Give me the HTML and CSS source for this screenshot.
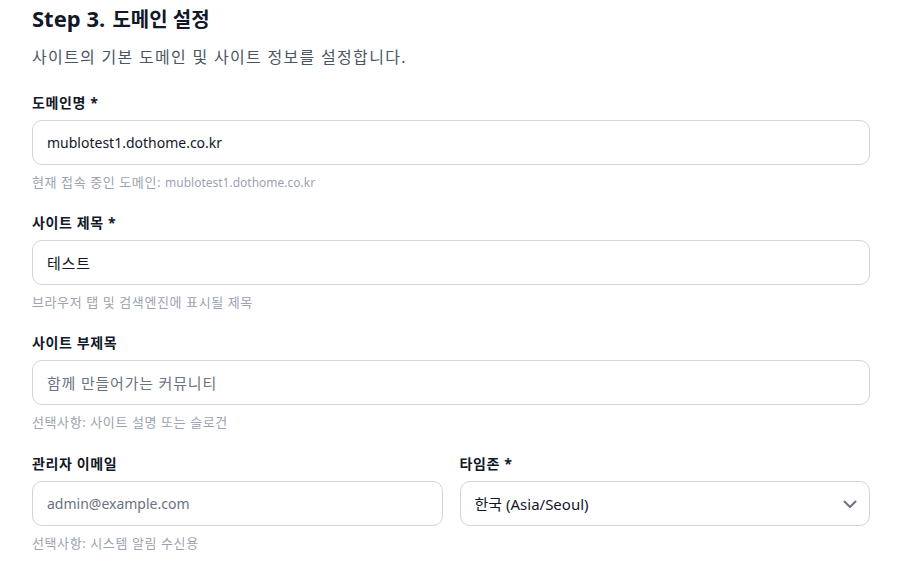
FILE: index.html
```html
<!DOCTYPE html>
<html lang="ko">
<head>
<meta charset="utf-8">
<link rel="stylesheet" href="styles.css">
</head>
<body>
<div class="page">
  <h2 class="title"><span class="step">Step 3.</span> 도메인 설정</h2>
  <p class="subtitle">사이트의 기본 도메인 및 사이트 정보를 설정합니다.</p>

  <div class="field">
    <label class="label">도메인명 *</label>
    <input class="input" type="text" value="mublotest1.dothome.co.kr">
    <p class="help">현재 접속 중인 도메인: <span class="help-latin">mublotest1.dothome.co.kr</span></p>
  </div>

  <div class="field">
    <label class="label">사이트 제목 *</label>
    <input class="input input-ko" type="text" value="테스트">
    <p class="help">브라우저 탭 및 검색엔진에 표시될 제목</p>
  </div>

  <div class="field">
    <label class="label">사이트 부제목</label>
    <input class="input input-ko" type="text" placeholder="함께 만들어가는 커뮤니티">
    <p class="help">선택사항: 사이트 설명 또는 슬로건</p>
  </div>

  <div class="row">
    <div class="field">
      <label class="label">관리자 이메일</label>
      <input class="input" type="email" placeholder="admin@example.com">
      <p class="help">선택사항: 시스템 알림 수신용</p>
    </div>
    <div class="field">
      <label class="label">타임존 *</label>
      <div class="select">
        <span>한국 (Asia/Seoul)</span>
        <svg class="chev" width="16" height="16" viewBox="0 0 16 16" fill="none"><path d="M2.5 5.5l5.5 5.5 5.5-5.5" stroke="#6b7280" stroke-width="2" stroke-linecap="round" stroke-linejoin="round"/></svg>
      </div>
    </div>
  </div>
</div>
</body>
</html>
```

FILE: styles.css
```css
* { box-sizing: border-box; }
html, body { margin: 0; padding: 0; background: #fff; }
body {
  font-family: "Noto Sans", "Noto Sans CJK KR", sans-serif;
  color: #111827;
}
.page {
  padding: 0 29px 0 32px;
}
.title {
  margin: 0;
  padding-top: 3px;
  font-size: 20px;
  font-weight: 700;
  line-height: 30px;
  color: #111827;
}
.step {
  font-size: 22px;
  margin-right: 2px;
}
.subtitle {
  margin: 10px 0 0;
  font-size: 16px;
  letter-spacing: 1.3px;
  line-height: 24px;
  color: #4b5563;
}
.field {
  margin-top: 24px;
}
.field + .field { margin-top: 22px; }
.row { margin-top: 23px; }
.row .field { margin-top: 0; }
.label {
  display: block;
  height: 20px;
  font-size: 14px;
  font-weight: 700;
  letter-spacing: 0.6px;
  line-height: 20px;
  color: #111827;
  margin-bottom: 7px;
}
.input, .select {
  display: flex;
  align-items: center;
  width: 100%;
  height: 45px;
  padding: 0 14px;
  border: 1px solid #d1d5db;
  border-radius: 10px;
  font-family: "Noto Sans", "Noto Sans CJK KR", sans-serif;
  font-size: 14px;
  color: #111827;
  background: #fff;
  outline: none;
}
.input-ko {
  font-size: 15px;
  letter-spacing: 0.8px;
}
.input::placeholder { color: #6b7280; }
.select {
  justify-content: space-between;
  font-size: 15px;
  padding-right: 11px;
}
.help {
  height: 18px;
  margin: 8px 0 0;
  font-size: 13px;
  letter-spacing: 0.6px;
  line-height: 18px;
  color: #9ca3af;
}
.help-latin {
  font-size: 12px;
  letter-spacing: 0;
  line-height: 1;
}
.row {
  display: grid;
  grid-template-columns: 1fr 1fr;
  gap: 17px;
}
```
